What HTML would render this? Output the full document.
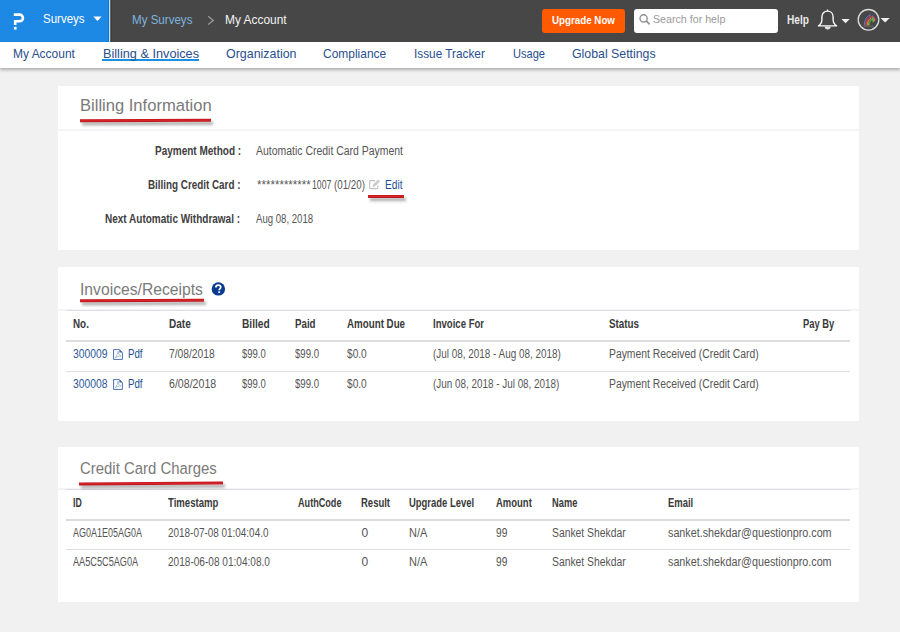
<!DOCTYPE html>
<html><head><meta charset="utf-8">
<style>
html,body{margin:0;padding:0;width:900px;height:632px;overflow:hidden;background:#f1f1f1;font-family:"Liberation Sans",sans-serif;}
.t{position:absolute;white-space:nowrap;line-height:1;transform-origin:0 0;}
.abs{position:absolute;}
#top{position:absolute;left:0;top:0;width:900px;height:42px;background:#474747;}
#blue{position:absolute;left:0;top:0;width:109px;height:42px;background:#1e88e5;}
#bline{position:absolute;left:109px;top:0;width:1px;height:42px;background:#c4e0f6;}
#bline2{position:absolute;left:110px;top:0;width:1px;height:42px;background:#6a645e;}
#nav{position:absolute;left:0;top:42px;width:900px;height:26px;background:#fff;box-shadow:0 2px 3px rgba(0,0,0,.28);}
.card{position:absolute;left:58px;width:801px;background:#fff;}
.sep{position:absolute;height:2px;background:#f3f4f7;}
.tl{position:absolute;left:66px;width:784px;height:1px;background:#dddee1;}
.th{position:absolute;left:66px;width:784px;height:2px;background:#dcdcde;}
.red{position:absolute;height:3px;background:linear-gradient(#c0121a,#d8262a 50%,#b01018);box-shadow:2px 3px 3px rgba(0,0,0,.35);transform:rotate(-0.3deg);}
</style></head><body>
<div id="top"></div>
<div id="blue"></div>
<div id="bline"></div>
<div id="bline2"></div>
<div class="abs" style="left:108px;top:0;width:1px;height:42px;background:#0d76df;"></div>
<div class="abs" style="left:111px;top:0;width:1px;height:42px;background:#3e3e3e;"></div>
<!-- logo -->
<svg class="abs" style="left:0;top:0" width="110" height="42">
  <path d="M13.8,14.6 H19.6 A3.35,3.35 0 0 1 19.6,21.3 H15.2 V25.1" fill="none" stroke="#fff" stroke-width="2.6"/>
  <rect x="13.9" y="26.9" width="2.7" height="2.7" fill="#fff"/>
  <path d="M93.3,16.5 L101.6,16.5 L97.45,21 Z" fill="#fff"/>
</svg>
<svg class="abs" style="left:200px;top:0" width="20" height="42"><path d="M8.2,16.2 L13.3,20.4 L8.2,24.6" fill="none" stroke="#999" stroke-width="1.3"/></svg>
<!-- upgrade button -->
<div class="abs" style="left:542px;top:8.5px;width:83px;height:24.5px;background:#ff5a00;border-radius:3px;"></div>
<!-- search -->
<div class="abs" style="left:634px;top:8.7px;width:143.5px;height:24.3px;background:#fff;border-radius:3px;"></div>
<svg class="abs" style="left:630px;top:0" width="30" height="42">
  <circle cx="13.6" cy="18.4" r="3.6" fill="none" stroke="#8e8e8e" stroke-width="1.35"/>
  <path d="M16.3,21.2 L19.2,23.9" stroke="#8e8e8e" stroke-width="1.6" stroke-linecap="round"/>
</svg>
<!-- bell + avatar -->
<svg class="abs" style="left:800px;top:0" width="100" height="42">
  <path d="M18.5,25.9 C20.8,24.3 21.9,22.6 21.9,19.5 V16.8 C21.9,13.3 24.3,11.1 27.5,11.1 C30.7,11.1 33.1,13.3 33.1,16.8 V19.5 C33.1,22.6 34.2,24.3 36.6,25.9 Z" fill="none" stroke="#fafafa" stroke-width="1.4" stroke-linejoin="round"/>
  <circle cx="27.5" cy="10.3" r="0.9" fill="#fafafa"/>
  <path d="M24.7,26.5 A3,3 0 0 0 30.7,26.5 Z" fill="#e0e0e0"/>
  <path d="M41.4,18.9 L49.7,18.9 L45.55,23.2 Z" fill="#f0f0f0"/>
  <circle cx="68.5" cy="19.8" r="10.3" fill="none" stroke="#dcdcdc" stroke-width="1.3"/>
  <g fill="none" stroke-width="0.9" stroke-linecap="round">
    <path d="M64.3,25 Q64.2,16.8 70.6,14.8" stroke="#3d8fd8"/>
    <path d="M65.3,25 Q65.2,17.8 70.8,15.9" stroke="#c0308a"/>
    <path d="M66.3,25 Q66.2,18.8 71,17" stroke="#ee3a30"/>
    <path d="M67.3,25 Q67.3,19.8 71.1,18.1" stroke="#f7941d"/>
    <path d="M68.3,25 Q68.4,20.8 71.2,19.2" stroke="#8cc63f"/>
    <path d="M69.2,24.8 Q69.4,21.8 71.3,20.3" stroke="#3fae49"/>
    <path d="M72.2,15.2 Q74.8,16.5 75.6,19.8" stroke="#b8338a"/>
    <path d="M72.2,16.4 Q74.2,17.6 74.7,20.6" stroke="#f7941d"/>
    <path d="M72.3,17.6 Q73.6,18.7 73.8,21.4" stroke="#47b6e0"/>
    <path d="M72.6,18.8 Q73.2,19.8 73.1,21.8" stroke="#8cc63f"/>
  </g>
  <path d="M63.4,26.2 H73.3" stroke="#777" stroke-width="0.8"/>
  <path d="M80.6,17.9 L89.7,17.9 L85.15,22.5 Z" fill="#f0f0f0"/>
</svg>
<div id="nav"></div>
<div class="abs" style="left:102px;top:59.3px;width:96.5px;height:1.7px;background:#1b8fe0;"></div>

<!-- card 1 -->
<div class="card" style="top:86px;height:164px;"></div>
<div class="sep" style="left:58px;top:129px;width:801px;"></div>
<div class="red" style="left:80px;top:118.7px;width:131px;"></div>
<svg class="abs" style="left:366px;top:176px" width="16" height="16">
  <path d="M9.2,4.6 H4.4 Q3.6,4.6 3.6,5.4 V11.8 Q3.6,12.6 4.4,12.6 H11 Q11.8,12.6 11.8,11.8 V9.2" fill="none" stroke="#c4c4c4" stroke-width="1.2"/>
  <path d="M7.2,10.4 L7.6,8.4 L12.2,3.9 L13.6,5.3 L9.1,9.9 Z" fill="#cfcfcf" stroke="#b5b5b5" stroke-width="0.6"/>
</svg>
<div class="red" style="left:368px;top:194.5px;width:36px;"></div>

<!-- card 2 -->
<div class="card" style="top:267px;height:154px;"></div>
<div class="sep" style="left:58px;top:309px;width:801px;"></div>
<div class="tl" style="top:310px;"></div>
<div class="th" style="top:340px;"></div>
<div class="tl" style="top:371px;"></div>
<div class="red" style="left:80px;top:299.1px;width:124px;"></div>
<svg class="abs" style="left:210px;top:281px" width="16" height="16">
  <circle cx="8.4" cy="7.9" r="6.7" fill="#083a8e"/>
  <path d="M5.9,6.4 C5.9,4.9 7,4.1 8.3,4.1 C9.7,4.1 10.7,4.9 10.7,6.2 C10.7,7.6 9.2,7.9 9.2,9.2" fill="none" stroke="#fff" stroke-width="1.8"/>
  <rect x="8.3" y="10.3" width="1.8" height="1.8" fill="#fff"/>
</svg>
<svg class="abs" style="left:110px;top:346px" width="16" height="16">
  <path d="M3.6,3.6 H9.4 L12.4,6.6 V13.4 H3.6 Z" fill="none" stroke="#4a6fae" stroke-width="1"/>
  <path d="M9.4,3.6 V6.6 H12.4 Z" fill="#3a62a8"/>
  <path d="M5.3,11.8 C6.5,10 8,7 8,5.3 C8.2,7.8 9.5,9.5 11,10 C9,10 7,10.6 5.3,11.8 Z" fill="none" stroke="#8aa0c8" stroke-width="0.7"/>
</svg>
<svg class="abs" style="left:110px;top:375.5px" width="16" height="16">
  <path d="M3.6,3.6 H9.4 L12.4,6.6 V13.4 H3.6 Z" fill="none" stroke="#4a6fae" stroke-width="1"/>
  <path d="M9.4,3.6 V6.6 H12.4 Z" fill="#3a62a8"/>
  <path d="M5.3,11.8 C6.5,10 8,7 8,5.3 C8.2,7.8 9.5,9.5 11,10 C9,10 7,10.6 5.3,11.8 Z" fill="none" stroke="#8aa0c8" stroke-width="0.7"/>
</svg>

<!-- card 3 -->
<div class="card" style="top:447px;height:155px;"></div>
<div class="sep" style="left:58px;top:488px;width:801px;"></div>
<div class="tl" style="top:489px;"></div>
<div class="th" style="top:519px;"></div>
<div class="tl" style="top:549px;"></div>
<div class="red" style="left:79px;top:482.2px;width:144px;"></div>

<div class="t" style="left:43.10px;top:12.06px;font-size:13.4px;font-weight:400;color:#fff;transform:scaleX(0.8608);">Surveys</div>
<div class="t" style="left:132.12px;top:13.43px;font-size:13.2px;font-weight:400;color:#7db3de;transform:scaleX(0.8772);">My Surveys</div>
<div class="t" style="left:224.70px;top:13.43px;font-size:13.2px;font-weight:400;color:#f2f2f2;transform:scaleX(0.9043);">My Account</div>
<div class="t" style="left:552.40px;top:14.52px;font-size:11.2px;font-weight:700;color:#fff;transform:scaleX(0.8729);">Upgrade Now</div>
<div class="t" style="left:653.00px;top:14.35px;font-size:11.4px;font-weight:400;color:#9a9a9a;transform:scaleX(0.9361);">Search for help</div>
<div class="t" style="left:787.00px;top:14.63px;font-size:11.9px;font-weight:700;color:#e8e8e8;transform:scaleX(0.8509);">Help</div>
<div class="t" style="left:12.92px;top:47.87px;font-size:12.2px;font-weight:400;color:#2a4f8e;transform:scaleX(0.9829);">My Account</div>
<div class="t" style="left:102.76px;top:47.87px;font-size:12.2px;font-weight:400;color:#2a4f8e;transform:scaleX(1.0425);">Billing &amp; Invoices</div>
<div class="t" style="left:226.00px;top:47.87px;font-size:12.2px;font-weight:400;color:#2a4f8e;transform:scaleX(1.0201);">Organization</div>
<div class="t" style="left:323.30px;top:47.87px;font-size:12.2px;font-weight:400;color:#2a4f8e;transform:scaleX(0.9818);">Compliance</div>
<div class="t" style="left:414.03px;top:47.87px;font-size:12.2px;font-weight:400;color:#2a4f8e;transform:scaleX(0.9681);">Issue Tracker</div>
<div class="t" style="left:512.80px;top:47.87px;font-size:12.2px;font-weight:400;color:#2a4f8e;transform:scaleX(0.9083);">Usage</div>
<div class="t" style="left:572.20px;top:47.87px;font-size:12.2px;font-weight:400;color:#2a4f8e;transform:scaleX(1.0114);">Global Settings</div>
<div class="t" style="left:79.75px;top:97.07px;font-size:17.4px;font-weight:400;color:#7a7a7a;transform:scaleX(0.9520);">Billing Information</div>
<div class="t" style="left:154.60px;top:144.84px;font-size:12px;font-weight:700;color:#404040;transform:scaleX(0.8334);">Payment Method :</div>
<div class="t" style="left:148.30px;top:178.84px;font-size:12px;font-weight:700;color:#404040;transform:scaleX(0.8202);">Billing Credit Card :</div>
<div class="t" style="left:105.30px;top:212.84px;font-size:12px;font-weight:700;color:#404040;transform:scaleX(0.8330);">Next Automatic Withdrawal :</div>
<div class="t" style="left:256.20px;top:144.84px;font-size:12px;font-weight:400;color:#555;transform:scaleX(0.8713);">Automatic Credit Card Payment</div>
<div class="t" style="left:256.60px;top:178.84px;font-size:12px;font-weight:400;color:#555;transform:scaleX(0.9597);">************</div>
<div class="t" style="left:311.70px;top:178.84px;font-size:12px;font-weight:400;color:#555;transform:scaleX(0.7253);">1007</div>
<div class="t" style="left:333.90px;top:178.84px;font-size:12px;font-weight:400;color:#555;transform:scaleX(0.8126);">(01/20)</div>
<div class="t" style="left:384.90px;top:178.84px;font-size:12px;font-weight:400;color:#1f4f9a;transform:scaleX(0.8480);">Edit</div>
<div class="t" style="left:256.20px;top:212.84px;font-size:12px;font-weight:400;color:#555;transform:scaleX(0.8003);">Aug 08, 2018</div>
<div class="t" style="left:80.10px;top:280.77px;font-size:17.4px;font-weight:400;color:#7a7a7a;transform:scaleX(0.9020);">Invoices/Receipts</div>
<div class="t" style="left:73.10px;top:317.94px;font-size:12px;font-weight:700;color:#3a3a3a;transform:scaleX(0.8212);">No.</div>
<div class="t" style="left:168.70px;top:317.94px;font-size:12px;font-weight:700;color:#3a3a3a;transform:scaleX(0.8354);">Date</div>
<div class="t" style="left:241.90px;top:317.94px;font-size:12px;font-weight:700;color:#3a3a3a;transform:scaleX(0.8503);">Billed</div>
<div class="t" style="left:294.70px;top:317.94px;font-size:12px;font-weight:700;color:#3a3a3a;transform:scaleX(0.8116);">Paid</div>
<div class="t" style="left:346.70px;top:317.94px;font-size:12px;font-weight:700;color:#3a3a3a;transform:scaleX(0.8137);">Amount Due</div>
<div class="t" style="left:432.80px;top:317.94px;font-size:12px;font-weight:700;color:#3a3a3a;transform:scaleX(0.7973);">Invoice For</div>
<div class="t" style="left:608.60px;top:317.94px;font-size:12px;font-weight:700;color:#3a3a3a;transform:scaleX(0.8189);">Status</div>
<div class="t" style="left:802.60px;top:317.94px;font-size:12px;font-weight:700;color:#3a3a3a;transform:scaleX(0.7806);">Pay By</div>
<div class="t" style="left:73.10px;top:348.14px;font-size:12px;font-weight:400;color:#2e5897;transform:scaleX(0.8645);">300009</div>
<div class="t" style="left:127.80px;top:348.14px;font-size:12px;font-weight:400;color:#234f91;transform:scaleX(0.8084);">Pdf</div>
<div class="t" style="left:168.70px;top:348.14px;font-size:12px;font-weight:400;color:#555;transform:scaleX(0.8564);">7/08/2018</div>
<div class="t" style="left:242.00px;top:348.14px;font-size:12px;font-weight:400;color:#555;transform:scaleX(0.7906);">$99.0</div>
<div class="t" style="left:294.70px;top:348.14px;font-size:12px;font-weight:400;color:#555;transform:scaleX(0.8005);">$99.0</div>
<div class="t" style="left:346.70px;top:348.14px;font-size:12px;font-weight:400;color:#555;transform:scaleX(0.8445);">$0.0</div>
<div class="t" style="left:432.80px;top:348.14px;font-size:12px;font-weight:400;color:#555;transform:scaleX(0.8254);">(Jul 08, 2018 - Aug 08, 2018)</div>
<div class="t" style="left:608.60px;top:348.14px;font-size:12px;font-weight:400;color:#555;transform:scaleX(0.8633);">Payment Received (Credit Card)</div>
<div class="t" style="left:73.10px;top:377.84px;font-size:12px;font-weight:400;color:#2e5897;transform:scaleX(0.8645);">300008</div>
<div class="t" style="left:127.80px;top:377.84px;font-size:12px;font-weight:400;color:#234f91;transform:scaleX(0.8084);">Pdf</div>
<div class="t" style="left:168.70px;top:377.84px;font-size:12px;font-weight:400;color:#555;transform:scaleX(0.8844);">6/08/2018</div>
<div class="t" style="left:242.00px;top:377.84px;font-size:12px;font-weight:400;color:#555;transform:scaleX(0.7906);">$99.0</div>
<div class="t" style="left:294.70px;top:377.84px;font-size:12px;font-weight:400;color:#555;transform:scaleX(0.8005);">$99.0</div>
<div class="t" style="left:346.70px;top:377.84px;font-size:12px;font-weight:400;color:#555;transform:scaleX(0.8445);">$0.0</div>
<div class="t" style="left:432.80px;top:377.84px;font-size:12px;font-weight:400;color:#555;transform:scaleX(0.8238);">(Jun 08, 2018 - Jul 08, 2018)</div>
<div class="t" style="left:608.60px;top:377.84px;font-size:12px;font-weight:400;color:#555;transform:scaleX(0.8633);">Payment Received (Credit Card)</div>
<div class="t" style="left:80.00px;top:460.07px;font-size:17.4px;font-weight:400;color:#7a7a7a;transform:scaleX(0.8574);">Credit Card Charges</div>
<div class="t" style="left:73.10px;top:496.84px;font-size:12px;font-weight:700;color:#3a3a3a;transform:scaleX(0.7297);">ID</div>
<div class="t" style="left:167.70px;top:496.84px;font-size:12px;font-weight:700;color:#3a3a3a;transform:scaleX(0.7977);">Timestamp</div>
<div class="t" style="left:297.80px;top:496.84px;font-size:12px;font-weight:700;color:#3a3a3a;transform:scaleX(0.7580);">AuthCode</div>
<div class="t" style="left:361.40px;top:496.84px;font-size:12px;font-weight:700;color:#3a3a3a;transform:scaleX(0.7907);">Result</div>
<div class="t" style="left:408.70px;top:496.84px;font-size:12px;font-weight:700;color:#3a3a3a;transform:scaleX(0.7868);">Upgrade Level</div>
<div class="t" style="left:495.80px;top:496.84px;font-size:12px;font-weight:700;color:#3a3a3a;transform:scaleX(0.7898);">Amount</div>
<div class="t" style="left:551.70px;top:496.84px;font-size:12px;font-weight:700;color:#3a3a3a;transform:scaleX(0.7755);">Name</div>
<div class="t" style="left:668.00px;top:496.84px;font-size:12px;font-weight:700;color:#3a3a3a;transform:scaleX(0.7859);">Email</div>
<div class="t" style="left:73.10px;top:526.84px;font-size:12px;font-weight:400;color:#555;transform:scaleX(0.7485);">AG0A1E05AG0A</div>
<div class="t" style="left:167.70px;top:526.84px;font-size:12px;font-weight:400;color:#555;transform:scaleX(0.8270);">2018-07-08 01:04:04.0</div>
<div class="t" style="left:361.40px;top:526.84px;font-size:12px;font-weight:400;color:#555;letter-spacing:0.000px;">0</div>
<div class="t" style="left:408.70px;top:526.84px;font-size:12px;font-weight:400;color:#555;transform:scaleX(0.9150);">N/A</div>
<div class="t" style="left:495.80px;top:526.84px;font-size:12px;font-weight:400;color:#555;transform:scaleX(0.8483);">99</div>
<div class="t" style="left:551.70px;top:526.84px;font-size:12px;font-weight:400;color:#555;transform:scaleX(0.8619);">Sanket Shekdar</div>
<div class="t" style="left:668.00px;top:526.84px;font-size:12px;font-weight:400;color:#555;transform:scaleX(0.8975);">sanket.shekdar@questionpro.com</div>
<div class="t" style="left:73.10px;top:556.34px;font-size:12px;font-weight:400;color:#555;transform:scaleX(0.7637);">AA5C5C5AG0A</div>
<div class="t" style="left:167.70px;top:556.34px;font-size:12px;font-weight:400;color:#555;transform:scaleX(0.8393);">2018-06-08 01:04:08.0</div>
<div class="t" style="left:361.40px;top:556.34px;font-size:12px;font-weight:400;color:#555;letter-spacing:0.000px;">0</div>
<div class="t" style="left:408.70px;top:556.34px;font-size:12px;font-weight:400;color:#555;transform:scaleX(0.9150);">N/A</div>
<div class="t" style="left:495.80px;top:556.34px;font-size:12px;font-weight:400;color:#555;transform:scaleX(0.8483);">99</div>
<div class="t" style="left:551.70px;top:556.34px;font-size:12px;font-weight:400;color:#555;transform:scaleX(0.8619);">Sanket Shekdar</div>
<div class="t" style="left:668.00px;top:556.34px;font-size:12px;font-weight:400;color:#555;transform:scaleX(0.8975);">sanket.shekdar@questionpro.com</div>
</body></html>
